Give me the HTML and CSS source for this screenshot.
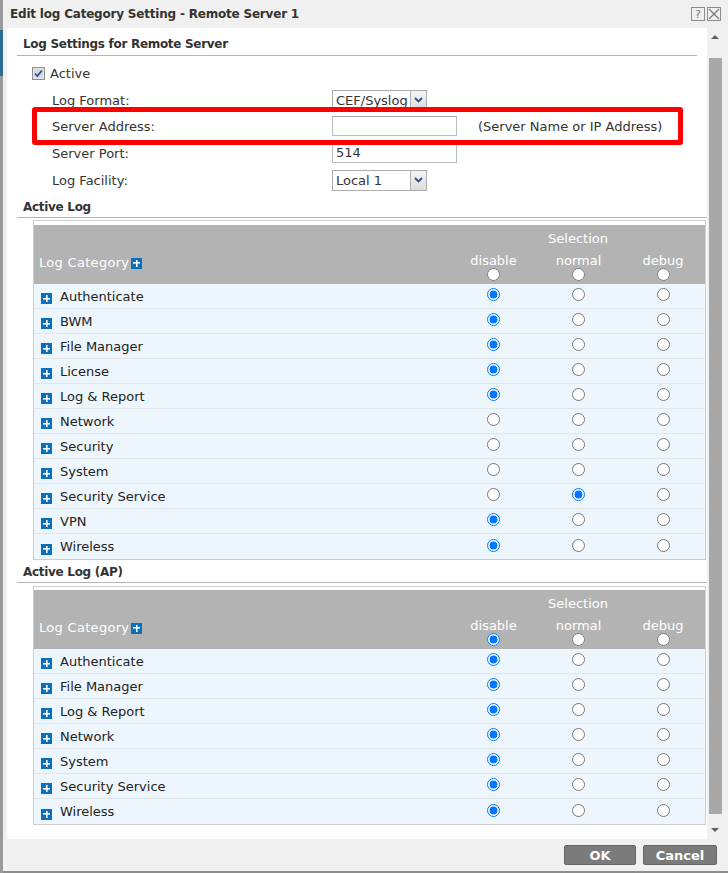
FILE: index.html
```html
<!DOCTYPE html>
<html lang="en">
<head>
  <meta charset="UTF-8">
  <title>Edit log Category Setting</title>
  <link rel="stylesheet" href="styles.css">
</head>
<body>
  <div class="dialog">
    <div class="titlebar">
      <span class="title">Edit log Category Setting - Remote Server 1</span>
      <span class="title-btns">
        <span class="tbtn">?</span>
        <span class="tbtn"><svg width="12" height="12" viewBox="0 0 12 12"><path d="M1 1L11 11M11 1L1 11" stroke="#7a7a7a" stroke-width="1.2"/></svg></span>
      </span>
    </div>

    <div class="body">
      <div class="content">
        <div class="section first">Log Settings for Remote Server</div>

        <div class="check-row">
          <svg class="checkbox" width="13" height="13" viewBox="0 0 13 13">
            <rect x="0.5" y="0.5" width="12" height="12" fill="#e4e8ee" stroke="#8e8f8f"/>
            <rect x="2" y="2" width="9" height="9" fill="#d6dbe3"/>
            <path d="M3 6.5L5.3 9L10 3.5" fill="none" stroke="#2a4f8f" stroke-width="1.8"/>
          </svg>
          <span>Active</span>
        </div>

        <div class="form-row">
          <span class="label">Log Format:</span>
          <div class="select">
            <span class="select-text">CEF/Syslog</span>
            <span class="select-btn"><svg width="9" height="6" viewBox="0 0 9 6"><path d="M1 1L4.5 4.5L8 1" fill="none" stroke="#2d4e80" stroke-width="1.8"/></svg></span>
          </div>
        </div>
        <div class="form-row">
          <span class="label">Server Address:</span>
          <div class="input"></div>
          <span class="hint">(Server Name or IP Address)</span>
        </div>
        <div class="form-row tall">
          <span class="label">Server Port:</span>
          <div class="input">514</div>
        </div>
        <div class="form-row">
          <span class="label">Log Facility:</span>
          <div class="select">
            <span class="select-text">Local 1</span>
            <span class="select-btn"><svg width="9" height="6" viewBox="0 0 9 6"><path d="M1 1L4.5 4.5L8 1" fill="none" stroke="#2d4e80" stroke-width="1.8"/></svg></span>
          </div>
        </div>

        <div class="section">Active Log</div>
        <div class="log-table" id="activeLog"></div>

        <div class="section ap">Active Log (AP)</div>
        <div class="log-table second" id="apLog"></div>

        <div class="highlight"></div>
      </div>

      <div class="scrollbar">
        <div class="sb-up"><span class="arrow-up"></span></div>
        <div class="sb-thumb"></div>
        <div class="sb-down"><span class="arrow-down"></span></div>
      </div>
    </div>

    <div class="footer">
      <button class="btn ok">OK</button>
      <button class="btn cancel">Cancel</button>
    </div>
  </div>

  <script>
    // 0 = disable, 1 = normal, 2 = debug
    const activeLog = [
      ["Authenticate", 0], ["BWM", 0], ["File Manager", 0], ["License", 0],
      ["Log & Report", 0], ["Network", -1], ["Security", -1], ["System", -1],
      ["Security Service", 1], ["VPN", 0], ["Wireless", 0]
    ];
    const apLog = [
      ["Authenticate", 0], ["File Manager", 0], ["Log & Report", 0], ["Network", 0],
      ["System", 0], ["Security Service", 0], ["Wireless", 0]
    ];

    function plusIcon(cls) {
      return '<span class="plus ' + cls + '"></span>';
    }

    function buildTable(el, rows, name, headChecked) {
      let html = '<div class="thead">' +
        '<div class="th-cat">Log Category' + plusIcon("head-plus") + '</div>' +
        '<div class="th-sel">Selection</div>';
      ["disable", "normal", "debug"].forEach((lvl, i) => {
        html += '<div class="th-lvl"><span>' + lvl + '</span>' +
          '<input type="radio" name="' + name + '-all"' + (headChecked === i ? ' checked' : '') + '></div>';
      });
      html += '</div>';
      rows.forEach((row, r) => {
        html += '<div class="trow"><div class="td-cat">' + plusIcon("row-plus") +
          '<span>' + row[0].replace("&", "&amp;") + '</span></div>';
        for (let i = 0; i < 3; i++) {
          html += '<div class="td-radio"><input type="radio" name="' + name + r + '"' +
            (row[1] === i ? ' checked' : '') + '></div>';
        }
        html += '</div>';
      });
      el.innerHTML = html;
    }

    buildTable(document.getElementById("activeLog"), activeLog, "log", -1);
    buildTable(document.getElementById("apLog"), apLog, "ap", 0);
  </script>
</body>
</html>
```

FILE: styles.css
```css
* {
  box-sizing: border-box;
}
body {
  margin: 0;
  background: linear-gradient(#9a9a9a 0 30px, #2b6d94 30px 76px, #9a9a9a 76px);
  font-family: "DejaVu Sans", sans-serif;
  font-size: 13px;
  color: #333;
}
.dialog {
  margin-left: 3px;
  height: 873px;
  background: #f0f0f0;
  border-bottom: 2px solid #8e8e8e;
  display: flex;
  flex-direction: column;
}
.titlebar {
  height: 28px;
  flex: none;
  display: flex;
  align-items: center;
  justify-content: space-between;
  padding: 0 7px 0 7px;
}
.title {
  font-weight: bold;
  font-size: 12px;
  letter-spacing: -0.2px;
  color: #333;
}
.title-btns {
  display: flex;
  gap: 2px;
}
.tbtn {
  width: 14px;
  height: 14px;
  border: 1px solid #8c8c8c;
  display: flex;
  align-items: center;
  justify-content: center;
  font-size: 11px;
  color: #777;
  line-height: 1;
}

.body {
  height: 811px;
  flex: none;
  display: flex;
  padding-left: 4px;
}
.content {
  width: 700px;
  background: #fff;
  position: relative;
  overflow: hidden;
  padding-left: 10px;
}
.section {
  font-weight: bold;
  font-size: 12px;
  letter-spacing: -0.3px;
  line-height: 20px;
  padding-left: 6px;
  padding-top: 4px;
  border-bottom: 1px solid #b4b4b4;
}
.section.first {
  margin-right: 10px;
  padding-top: 6px;
  padding-bottom: 1px;
}
.section.ap {
  padding-top: 2px;
}
.check-row {
  margin-top: 7px;
  height: 20px;
  display: flex;
  align-items: center;
  gap: 5px;
  padding-left: 15px;
}
.checkbox {
  display: block;
}
.form-row {
  height: 26px;
  display: flex;
  align-items: center;
  padding-left: 35px;
}
.check-row + .form-row {
  margin-top: 4px;
}
.form-row.tall {
  height: 28px;
}
.label {
  width: 280px;
  flex: none;
}
.input {
  width: 125px;
  height: 20px;
  border: 1px solid #b7bcc4;
  border-top-color: #a0a5ad;
  padding: 1px 3px;
  line-height: 16px;
}
.hint {
  margin-left: 21px;
}
.select {
  width: 95px;
  height: 21px;
  border: 1px solid #acacac;
  display: flex;
}
.select-text {
  flex: 1;
  overflow: hidden;
  white-space: nowrap;
  padding: 1px 3px;
  line-height: 17px;
}
.select-btn {
  width: 16px;
  flex: none;
  background: linear-gradient(#f4f4f4, #dcdcdc);
  border-left: 1px solid #b0b0b0;
  display: flex;
  align-items: center;
  justify-content: center;
}

.log-table {
  margin: 2px 1px 0 16px;
  border: 1px solid #cdcdcd;
  padding-top: 4px;
}
.log-table.second {
  margin-top: 3px;
  padding-top: 3px;
}
.thead {
  height: 59px;
  background: #b3b3b3;
  color: #fff;
  display: grid;
  grid-template-columns: 417px 85px 85px 84px;
  grid-template-rows: 26px 33px;
}
.th-cat {
  grid-row: 1 / 3;
  grid-column: 1;
  align-self: end;
  padding: 0 0 11px 5px;
  line-height: 20px;
  letter-spacing: 0.3px;
  display: flex;
  align-items: center;
}
.th-sel {
  grid-column: 2 / 5;
  grid-row: 1;
  text-align: center;
  padding-top: 6px;
  line-height: 16px;
}
.th-lvl {
  grid-row: 2;
  display: flex;
  flex-direction: column;
  align-items: center;
  padding-top: 3px;
  line-height: 14px;
}
.th-lvl input {
  margin: -3px 0 0 0;
}
.plus {
  display: inline-block;
  width: 11px;
  height: 11px;
  background:
    linear-gradient(#fff, #fff) center / 7px 1.6px no-repeat,
    linear-gradient(#fff, #fff) center / 1.6px 7px no-repeat,
    #0a6fbd;
  flex: none;
}
.head-plus {
  margin-left: 2px;
}
.row-plus {
  margin: 5px 8px 0 7px;
}
.trow {
  height: 25px;
  background: #eef6fd;
  border-bottom: 1px solid #dfe6ec;
  display: grid;
  grid-template-columns: 417px 85px 85px 84px;
  color: #222;
}
.trow:last-child {
  border-bottom: none;
}
.td-cat {
  display: flex;
  align-items: center;
}
.td-radio {
  display: flex;
  justify-content: center;
  align-items: center;
  padding-bottom: 3px;
}
input[type="radio"] {
  width: 13px;
  height: 13px;
  margin: 0;
}

.highlight {
  position: absolute;
  left: 25px;
  top: 79px;
  width: 651px;
  height: 38px;
  border: 5px solid #ff0000;
  border-radius: 3px;
}

.scrollbar {
  width: 15px;
  display: flex;
  flex-direction: column;
}
.sb-up {
  height: 30px;
  padding-top: 7px;
  display: flex;
  justify-content: center;
}
.arrow-up {
  width: 0;
  height: 0;
  border-left: 4px solid transparent;
  border-right: 4px solid transparent;
  border-bottom: 4px solid #606060;
}
.sb-thumb {
  height: 756px;
  margin-left: 2px;
  background: #a8a8a8;
}
.sb-down {
  flex: 1;
  padding-top: 14px;
  display: flex;
  justify-content: center;
}
.arrow-down {
  width: 0;
  height: 0;
  border-left: 4px solid transparent;
  border-right: 4px solid transparent;
  border-top: 4px solid #606060;
}

.footer {
  flex: 1;
  display: flex;
  justify-content: flex-end;
  gap: 7px;
  padding: 6px 11px 0 0;
}
.btn {
  height: 20px;
  border: 1px solid #666;
  border-radius: 2px;
  background: #7b7b7b;
  color: #fff;
  font-family: "DejaVu Sans", sans-serif;
  font-weight: bold;
  font-size: 13px;
  padding: 0;
}
.btn.ok {
  width: 72px;
}
.btn.cancel {
  width: 74px;
}
```
